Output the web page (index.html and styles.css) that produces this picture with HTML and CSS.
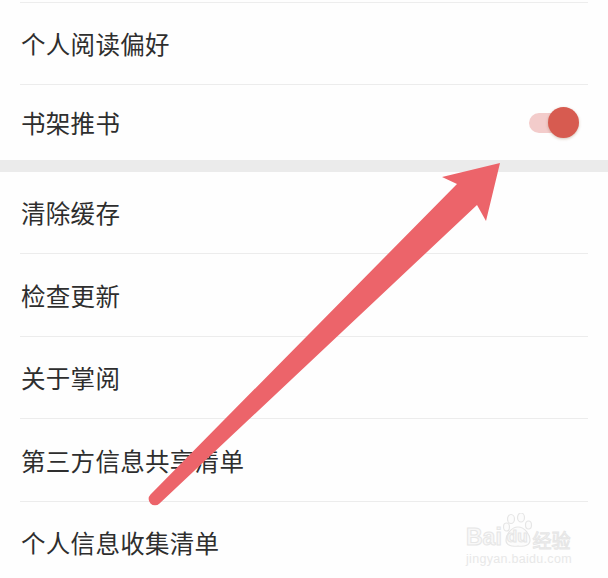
FILE: index.html
```html
<!DOCTYPE html>
<html lang="zh-CN">
  <head>
    <meta charset="UTF-8" />
    <meta name="viewport" content="width=device-width, initial-scale=1.0" />
    <title>设置</title>
    <link rel="stylesheet" href="styles.css">
  </head>
  <body>
    <div class="settings">
      <div class="group group-first">
        <div class="row"><span class="label">个人阅读偏好</span></div>
        <div class="row row-end">
          <span class="label">书架推书</span>
          <span class="switch">
            <span class="track"></span>
            <span class="thumb"></span>
          </span>
        </div>
      </div>
      <div class="group">
        <div class="row"><span class="label">清除缓存</span></div>
        <div class="row"><span class="label">检查更新</span></div>
        <div class="row"><span class="label">关于掌阅</span></div>
        <div class="row"><span class="label">第三方信息共享清单</span></div>
        <div class="row row-end"><span class="label">个人信息收集清单</span></div>
      </div>
    </div>

    <!-- annotation arrow drawn over the list -->
    <svg class="arrow" width="608" height="578" viewBox="0 0 608 578">
      <path d="M457 184 L442 177 L500 163 L486 221 L477 205 L159.5 503.5 A6 6 0 0 1 150.5 494.5 Z" fill="#ec646a" />
    </svg>

    <div class="watermark">
      <div class="wm-logo">
        <span class="wm-bai">Bai</span>
        <svg class="wm-paw" width="30" height="36" viewBox="0 0 30 36">
          <ellipse cx="8" cy="6" rx="3.5" ry="4.5" />
          <ellipse cx="18" cy="4.5" rx="3.5" ry="4.5" />
          <ellipse cx="3.5" cy="14" rx="3" ry="4" />
          <ellipse cx="25.5" cy="12" rx="3" ry="4" />
          <path d="M15 14 C8 14 3 22 3 27 C3 32 8 34 15 33 C22 34 27 32 27 27 C27 22 22 14 15 14 Z" />
        </svg>
        <span class="wm-du">du</span>
        <span class="wm-jy">经验</span>
      </div>
      <div class="wm-url">jingyan.baidu.com</div>
    </div>
  </body>
</html>
```

FILE: styles.css
```css
body {
  margin: 0;
  width: 608px;
  height: 578px;
  overflow: hidden;
  position: relative;
  background-color: #fefefe;
  font-family: "Noto Sans CJK SC", "Noto Sans", sans-serif;
  color: #2e2e2e;
}

.settings {
  padding-top: 2px;
}

.group-first {
  border-top: 1px solid #ededed;
  margin: 0 20px;
}

.group {
  margin: 0 20px;
}

.group + .group {
  border-top: 12px solid #ebebeb;
  margin: 0;
  padding: 0 20px;
}

.row {
  display: flex;
  align-items: center;
  justify-content: space-between;
  height: 81.4px;
  border-bottom: 1px solid #ececec;
}

.row-end {
  border-bottom: none;
}

.group-first .row-end {
  height: 74.6px;
}

.label {
  font-size: 24.5px;
  line-height: 1;
  letter-spacing: 0.3px;
  padding-top: 2px;
  margin-left: 1px;
}

/* switch */
.switch {
  position: relative;
  width: 50px;
  height: 31px;
  margin-right: 9px;
}

.switch .track {
  position: absolute;
  left: 0;
  top: 6px;
  width: 44px;
  height: 20px;
  border-radius: 10px;
  background-color: #f3cccb;
}

.switch .thumb {
  position: absolute;
  right: 0;
  top: 0;
  width: 31px;
  height: 31px;
  border-radius: 50%;
  background-color: #d75b50;
  box-shadow: 0 1px 3px rgba(120, 60, 20, 0.3);
}

.arrow {
  position: absolute;
  left: 0;
  top: 0;
}

/* faint watermark, bottom right */
.watermark {
  position: absolute;
  left: 466px;
  top: 511px;
  color: #f8f8f8;
  font-family: "Liberation Sans", Arial, sans-serif;
  font-weight: bold;
}

.wm-logo {
  display: flex;
  align-items: flex-end;
  height: 38px;
}

.wm-bai,
.wm-du {
  font-size: 23px;
  line-height: 1;
  -webkit-text-stroke: 1px #e6e6e6;
}

.wm-paw {
  margin-left: 1px;
  margin-right: -26px;
  fill: #fcfcfc;
  stroke: #e6e6e6;
  stroke-width: 1.2;
}

.wm-du {
  font-size: 17px;
  margin-right: 5px;
  margin-bottom: 4px;
}

.wm-jy {
  font-family: "Noto Sans CJK SC", sans-serif;
  font-weight: normal;
  font-size: 19px;
  line-height: 1;
  -webkit-text-stroke: 1px #e6e6e6;
}

.wm-url {
  font-size: 12.5px;
  font-weight: normal;
  margin-top: 3px;
  color: #e8e8e8;
  letter-spacing: 0.3px;
}
```
